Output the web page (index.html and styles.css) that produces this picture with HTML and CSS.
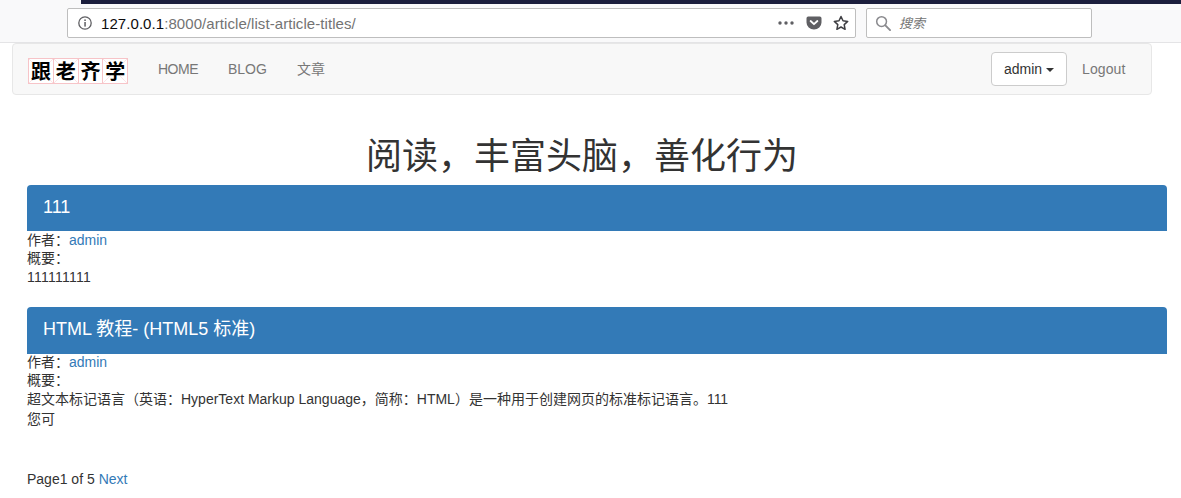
FILE: index.html
```html
<!DOCTYPE html>
<html lang="zh">
<head>
<meta charset="utf-8">
<title>文章</title>
<link rel="stylesheet" href="styles.css">
</head>
<body>
<header class="chrome">
  <div class="chrome-strip"></div>
  <div class="chrome-row">
    <div class="urlbar">
      <svg class="info-icon" width="16" height="16" viewBox="0 0 16 16"><circle cx="8" cy="8" r="6.2" fill="none" stroke="#5f5f63" stroke-width="1.3"/><rect x="7.3" y="7" width="1.5" height="4.6" fill="#5f5f63"/><rect x="7.3" y="4.4" width="1.5" height="1.6" fill="#5f5f63"/></svg>
      <div class="url"><span class="url-host">127.0.0.1</span>:8000/article/list-article-titles/</div>
      <div class="url-actions">
        <svg width="18" height="6" viewBox="0 0 18 6"><circle cx="3" cy="3" r="1.7" fill="#5f5f63"/><circle cx="9" cy="3" r="1.7" fill="#5f5f63"/><circle cx="15" cy="3" r="1.7" fill="#5f5f63"/></svg>
        <svg width="16" height="16" viewBox="0 0 16 16"><path d="M2.2 1.5h11.6a1.7 1.7 0 0 1 1.7 1.7v4.3a7.5 7 0 0 1-15 0V3.200a1.700 1.700 0 0 1 1.700-1.700z" fill="#5f5f63"/><path d="M4.600 6l3.400 3.200L11.400 6" fill="none" stroke="#fff" stroke-width="1.800" stroke-linecap="round" stroke-linejoin="round"/></svg>
        <svg width="16" height="16" viewBox="0 0 16 16"><path d="M8 1.500l2 4.300 4.700.6-3.500 3.200.9 4.700L8 12l-4.100 2.300.9-4.700L1.300 6.400 6 5.800z" fill="none" stroke="#3f3f43" stroke-width="1.500" stroke-linejoin="round"/></svg>
      </div>
    </div>
    <div class="searchbar">
      <svg width="16" height="16" viewBox="0 0 17 17"><circle cx="7" cy="7" r="5.200" fill="none" stroke="#8a8a8e" stroke-width="1.600"/><path d="M11 11l5 5" stroke="#8a8a8e" stroke-width="2" stroke-linecap="round"/></svg>
      <span class="search-hint">搜索</span>
    </div>
  </div>
</header>

<nav class="navbar">
  <div class="nav-left">
    <div class="logo"><span class="logo-cell">跟</span><span class="logo-cell">老</span><span class="logo-cell">齐</span><span class="logo-cell">学</span></div>
    <ul class="nav-links">
      <li><a class="nav-home" href="#">HOME</a></li>
      <li><a href="#">BLOG</a></li>
      <li><a href="#">文章</a></li>
    </ul>
  </div>
  <div class="nav-right">
    <button class="user-btn" type="button">admin <span class="caret"></span></button>
    <a class="logout" href="#">Logout</a>
  </div>
</nav>

<main class="content">
  <h1 class="page-title">阅读，丰富头脑，善化行为</h1>
  <div class="articles">
    <article class="article">
      <h2 class="article-head">111</h2>
      <div class="article-meta">作者：<a href="#">admin</a></div>
      <div class="article-meta">概要：</div>
      <p class="article-body article-digits">111111111</p>
    </article>
    <article class="article">
      <h2 class="article-head article-head-tall">HTML 教程- (HTML5 标准)</h2>
      <div class="article-meta">作者：<a href="#">admin</a></div>
      <div class="article-meta">概要：</div>
      <p class="article-body">超文本标记语言（英语：HyperText Markup Language，简称：HTML）是一种用于创建网页的标准标记语言。111<br>您可</p>
    </article>
    <div class="pager">Page1 of 5 <a href="#">Next</a></div>
  </div>
</main>
</body>
</html>
```
FILE: styles.css
```css
* { box-sizing: border-box; }
html, body { margin: 0; padding: 0; }
body {
  background: #fff;
  color: #333;
  font-family: "Liberation Sans", "Noto Sans CJK SC", sans-serif;
  font-size: 14px;
  line-height: 20px;
  overflow: hidden;
}
a { color: #337ab7; text-decoration: none; }

.chrome { height: 43px; background: #f9f9fa; border-bottom: 1px solid #e4e4e6; }
.chrome-strip { height: 4px; margin-left: 81px; background: #1b1e3d; }
.chrome-row { display: flex; gap: 10px; padding: 4px 0 0 67px; }
.urlbar, .searchbar {
  display: flex; align-items: center; height: 30px; background: #fff;
  border: 1px solid #bebebe; border-radius: 2px;
}
.urlbar { width: 789px; padding: 0 6px 0 9px; }
.info-icon { flex: none; }
.url { flex: 1; margin-left: 8px; padding-top: 1px; color: #737373; font-size: 15px; letter-spacing: 0.07px; }
.url-host { color: #0c0c0d; }
.url-actions { display: flex; align-items: center; gap: 11px; }
.searchbar { width: 226px; padding-left: 8px; gap: 8px; }
.search-hint { padding-top: 2px; color: #737373; font-size: 13px; font-style: italic; }

.navbar {
  display: flex; justify-content: space-between; align-items: center;
  width: 1140px; height: 52px; margin-left: 12px; padding: 0 15px;
  background: #f8f8f8; border: 1px solid #e7e7e7; border-radius: 4px;
}
.nav-left, .nav-right, .nav-links { display: flex; align-items: center; }
.logo { display: flex; width: 100px; margin-top: 3px; border: 1px solid #f7c4c8; background: #fff; }
.logo-cell {
  flex: 1; height: 24px; color: #000; font-family: "Noto Sans CJK SC", sans-serif;
  font-size: 20px; font-weight: 700; line-height: 24px; text-align: center;
  border-right: 1px solid #f7c4c8;
  background:
    linear-gradient(45deg, transparent 49%, #fbe3e5 49%, #fbe3e5 51%, transparent 51%),
    linear-gradient(-45deg, transparent 49%, #fbe3e5 49%, #fbe3e5 51%, transparent 51%);
}
.logo-cell:last-child { border-right: 0; }
.nav-links { list-style: none; margin: 0 0 0 30px; padding: 0; gap: 30px; }
.nav-links a, .logout { color: #777; }
.nav-home { letter-spacing: -0.5px; }
.user-btn {
  width: 76px; height: 34px; padding: 0; background: #fff; color: #333;
  border: 1px solid #ccc; border-radius: 4px;
  font: 14px "Liberation Sans", sans-serif;
}
.caret {
  display: inline-block; vertical-align: middle;
  border-top: 4px solid #333; border-left: 4px solid transparent; border-right: 4px solid transparent;
}
.logout { width: 44px; margin: 0 10px 0 15px; white-space: nowrap; letter-spacing: 0.1px; }

.page-title {
  width: 1140px; margin: 31px 0 5px 12px;
  font-size: 36px; font-weight: 400; line-height: 54px; text-align: center;
  font-family: "Noto Sans CJK SC", sans-serif;
}
.articles { width: 1140px; margin: 0 0 0 27px; }
.article { margin-bottom: 20px; }
.article-head {
  margin: 0; padding: 12px 16px 14px; background: #337ab7; color: #fff;
  border-radius: 4px 4px 0 0; font-size: 18px; font-weight: 400; line-height: 20px;
}
.article-head-tall { margin-bottom: -1px; padding: 12px 16px 14px; line-height: 21px; }
.article-meta { line-height: 18px; }
.article-body { margin: 0; line-height: 20px; }
.article-digits { letter-spacing: 0.25px; }
.pager { margin-top: 40px; }
```
